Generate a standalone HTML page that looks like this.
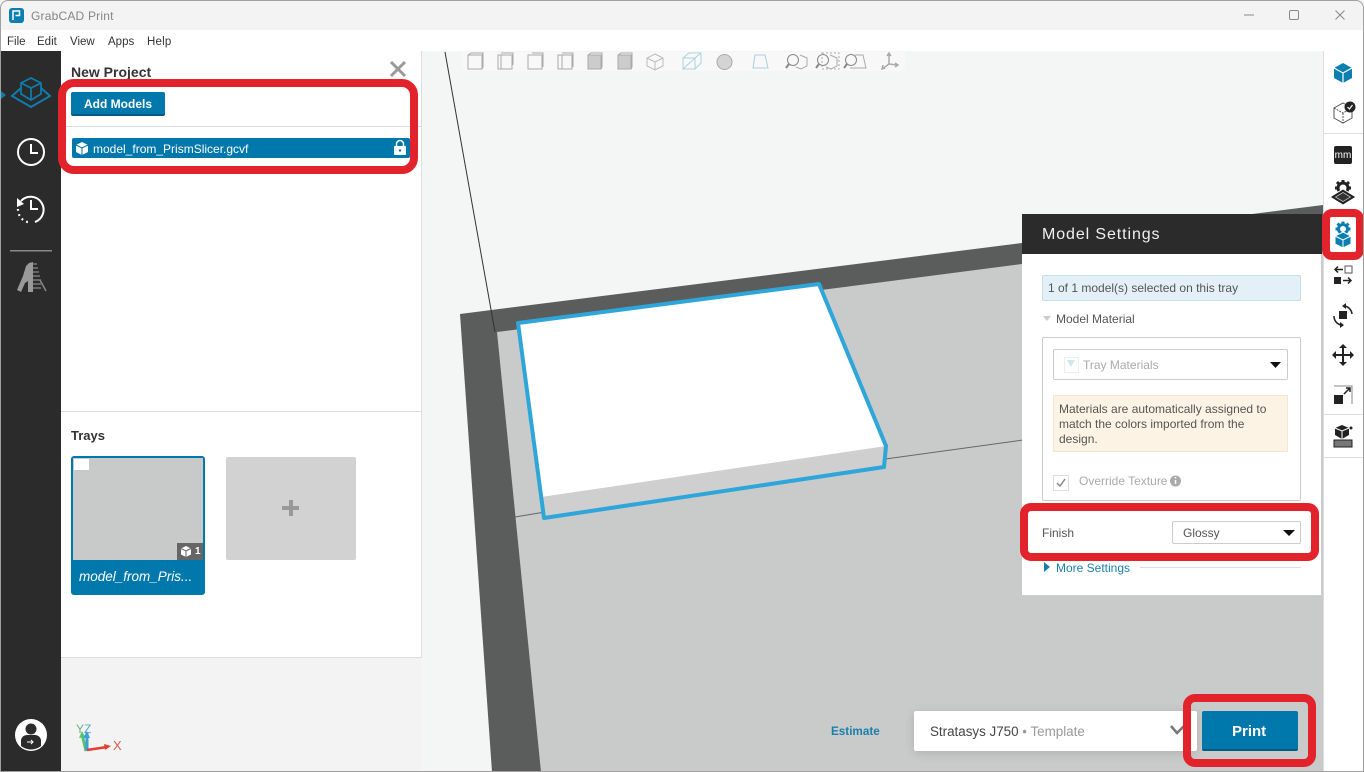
<!DOCTYPE html>
<html><head><meta charset="utf-8"><style>
html,body{margin:0;padding:0;background:#fff}
#w{position:relative;width:1364px;height:772px;overflow:hidden;font-family:"Liberation Sans",sans-serif;font-size:12px;color:#444}
.a{position:absolute}
.t{position:absolute;white-space:nowrap;line-height:14px}
svg{position:absolute;left:0;top:0}
</style></head><body><div id="w">
<div class="a" style="left:0;top:0;width:1364px;height:772px;background:#f4f5f5"></div>
<div class="a" style="left:462px;top:52px;width:443px;height:19px;background:#f8f8f8;border-radius:0 0 4px 4px"></div>
<svg width="1364" height="772" viewBox="0 0 1364 772">
<polygon points="460,314 1323,205 1323,772 492,772" fill="#5b5c5c"/>
<polygon points="497,332 1323,225 1323,772 541,772" fill="#c9caca"/>
<line x1="445" y1="52" x2="495" y2="332" stroke="#333" stroke-width="1"/>
<line x1="515" y1="517" x2="545" y2="512" stroke="#666" stroke-width="1"/>
<line x1="885" y1="459" x2="1023" y2="440" stroke="#666" stroke-width="1"/>
<polygon points="518,323 819,284 886,446 884,467 544,518" fill="#cfcfcf"/>
<polygon points="518,323 819,284 886,446 541,497" fill="#fff"/>
<polygon points="518,323 819,284 886,446 884,467 544,518" fill="none" stroke="#2fa6d9" stroke-width="4" stroke-linejoin="round"/>
</svg>
<div class="a" style="left:0;top:0;width:1364px;height:30px;background:#f3f3f3"></div>
<div class="a" style="left:0;top:30px;width:1364px;height:21px;background:#fff"></div>
<div class="t" style="left:31px;top:9px;color:#858585;font-size:12px;letter-spacing:.2px">GrabCAD Print</div>
<div class="t" style="left:7px;top:35px;font-size:11.5px;color:#333">File</div>
<div class="t" style="left:37px;top:35px;font-size:11.5px;color:#333">Edit</div>
<div class="t" style="left:70px;top:35px;font-size:11.5px;color:#333">View</div>
<div class="t" style="left:108px;top:35px;font-size:11.5px;color:#333">Apps</div>
<div class="t" style="left:147px;top:35px;font-size:11.5px;letter-spacing:.2px;color:#333">Help</div>
<div class="a" style="left:1px;top:51px;width:60px;height:720px;background:#2b2b2b"></div>
<div class="a" style="left:61px;top:51px;width:360px;height:606px;background:#fff;border-right:1px solid #ddd;border-bottom:1px solid #ddd"></div>
<div class="a" style="left:61px;top:658px;width:360px;height:113px;background:#f3f3f3"></div>
<div class="t" style="left:71px;top:65px;font-size:14px;font-weight:bold;color:#333">New Project</div>
<div class="a" style="left:71px;top:92px;width:94px;height:24px;background:#0078ab;border-bottom:2px solid #055a80;box-sizing:border-box;border-radius:2px"></div>
<div class="t" style="left:84px;top:97px;font-size:12px;font-weight:bold;color:#fff">Add Models</div>
<div class="a" style="left:61px;top:126px;width:360px;height:1px;background:#ddd"></div>
<div class="a" style="left:72px;top:138px;width:338px;height:20px;background:#0078ab;border-radius:2px"></div>
<div class="t" style="left:93px;top:142px;font-size:12px;color:#fff">model_from_PrismSlicer.gcvf</div>
<div class="a" style="left:61px;top:411px;width:360px;height:1px;background:#ddd"></div>
<div class="t" style="left:71px;top:429px;font-size:13px;font-weight:bold;color:#333">Trays</div>
<div class="a" style="left:71px;top:456px;width:134px;height:139px;background:#0078ab;border-radius:3px"></div>
<div class="a" style="left:73px;top:458px;width:130px;height:102px;background:#c8c9c9"></div>
<div class="a" style="left:74px;top:459px;width:15px;height:11px;background:#fff"></div>
<div class="a" style="left:177px;top:543px;width:26px;height:17px;background:#666"></div>
<div class="t" style="left:195px;top:545px;font-size:10px;font-weight:bold;color:#fff">1</div>
<div class="t" style="left:79px;top:570px;font-size:13.5px;font-style:italic;color:#fff">model_from_Pris...</div>
<div class="a" style="left:226px;top:457px;width:130px;height:103px;background:#d2d2d2;border-radius:2px"></div>
<div class="a" style="left:282px;top:506px;width:17px;height:4px;background:#999"></div>
<div class="a" style="left:289px;top:500px;width:4px;height:16px;background:#999"></div>
<div class="t" style="left:76px;top:722px;font-size:12px;color:#6cb08a">Y<span style="color:#5aa6c8">Z</span></div>
<div class="t" style="left:113px;top:739px;font-size:13px;color:#d8584f">X</div>
<div class="a" style="left:831px;top:725px;font-size:11.7px;font-weight:bold;color:#1a7fab;white-space:nowrap;line-height:14px">Estimate</div>
<div class="a" style="left:914px;top:711px;width:283px;height:40px;background:#fff;border-radius:2px;box-shadow:0 2px 10px rgba(0,0,0,.12)"></div>
<div class="t" style="left:930px;top:725px;font-size:13.4px;color:#444">Stratasys J750 <span style="color:#999">• Template</span></div>
<div class="a" style="left:1202px;top:711px;width:96px;height:40px;background:#0078ab;border-bottom:2px solid #055a80;box-sizing:border-box;border-radius:2px"></div>
<div class="t" style="left:1232px;top:725px;font-size:15px;font-weight:bold;color:#fff">Print</div>
<div class="a" style="left:1323px;top:51px;width:41px;height:721px;background:#fff;border-left:1px solid #ddd;box-sizing:border-box"></div>
<div class="a" style="left:1323px;top:133px;width:41px;height:1px;background:#ddd"></div>
<div class="a" style="left:1323px;top:414px;width:41px;height:1px;background:#ddd"></div>
<div class="a" style="left:1323px;top:457px;width:41px;height:1px;background:#ddd"></div>
<div class="a" style="left:1022px;top:214px;width:300px;height:382px;background:#fff;border-right:1px solid #ccc;border-bottom:1px solid #ccc;box-sizing:border-box"></div>
<div class="a" style="left:1022px;top:214px;width:300px;height:40px;background:#2b2b2b"></div>
<div class="t" style="left:1042px;top:228px;font-size:16px;color:#f0f0f0;letter-spacing:.9px">Model Settings</div>
<div class="a" style="left:1042px;top:275px;width:259px;height:26px;background:#e3f0f7;border:1px solid #c8dfea;box-sizing:border-box;border-radius:2px"></div>
<div class="t" style="left:1048px;top:281px;font-size:12px;color:#555">1 of 1 model(s) selected on this tray</div>
<div class="t" style="left:1056px;top:312px;font-size:12px;color:#555">Model Material</div>
<div class="a" style="left:1042px;top:337px;width:259px;height:164px;border:1px solid #ccc;box-sizing:border-box;border-radius:2px"></div>
<div class="a" style="left:1053px;top:349px;width:235px;height:31px;border:1px solid #ccc;box-sizing:border-box;border-radius:2px"></div>
<div class="t" style="left:1083px;top:358px;font-size:12px;color:#aaa">Tray Materials</div>
<div class="a" style="left:1053px;top:395px;width:235px;height:57px;background:#fdf3e4;border:1px solid #f6e6cf;box-sizing:border-box"></div>
<div class="t" style="left:1059px;top:402px;font-size:12px;color:#555;line-height:15px">Materials are automatically assigned to<br>match the colors imported from the<br>design.</div>
<div class="a" style="left:1053px;top:475px;width:16px;height:16px;border:1px solid #ddd;box-sizing:border-box"></div>
<div class="t" style="left:1079px;top:474px;font-size:12px;color:#aaa">Override Texture</div>
<div class="t" style="left:1042px;top:526px;font-size:12px;color:#555">Finish</div>
<div class="a" style="left:1172px;top:521px;width:129px;height:23px;border:1px solid #ccc;box-sizing:border-box;border-radius:2px"></div>
<div class="t" style="left:1183px;top:526px;font-size:12px;color:#555">Glossy</div>
<div class="t" style="left:1056px;top:561px;font-size:12px;color:#1a7fab">More Settings</div>
<div class="a" style="left:1140px;top:567px;width:161px;height:1px;background:#ddd"></div>
<svg width="1364" height="772" viewBox="0 0 1364 772">
<rect x="9" y="8" width="15" height="15" rx="3" fill="#0a7fb0"/>
<path d="M13 20V11h6.500v4.500H15.500" fill="none" stroke="#fff" stroke-width="1.500"/>
<g fill="none" stroke="#888" stroke-width="1">
<path d="M1244 15h10"/><rect x="1289.500" y="10.500" width="9" height="9" rx="1.500"/><path d="M1335.500 10.500l9 9M1344.500 10.500l-9 9"/>
</g>
<path d="M391 62l14 14M405 62l-14 14" stroke="#999" stroke-width="3" fill="none"/>
<path d="M1 91l5 4-5 4z" fill="#0a7fb0"/>
<g fill="none" stroke="#0a7fb0" stroke-width="2">
<path d="M21 88l-9 8 19 11 19-11-9-8"/>
</g>
<g fill="none" stroke="#0a7fb0" stroke-width="1.700">
<path d="M31 78l10 5v11l-10 6-10-6V83zM21 83l10 5 10-5M31 88v12"/>
</g>
<g fill="none" stroke="#fff" stroke-width="2">
<circle cx="31" cy="152" r="13"/><path d="M31 144v9h7"/>
<g transform="translate(0 -2)">
<path d="M21 203a13 13 0 1 1 14 21"/><path d="M31 202v9h7"/>
<path d="M18 211a13 13 0 0 0 13 13.500" stroke-dasharray="1.800 3.500" stroke-width="2.200"/>
</g>
</g>
<path d="M17 198l7 6-7 3z" fill="#fff"/>
<rect x="10" y="250" width="42" height="1.500" fill="#888"/>
<path d="M33 262v30h-5v-11l-3 2-4 9-4-2 6-14 3-10 3-3z" fill="#999"/>
<g stroke="#888" stroke-width="1.200"><path d="M33 264h4M33 268h5M33 272h6M33 276h7M33 280h8M33 284h8M33 288h8"/><path d="M40 280l6 11" stroke-width="1.500"/></g>
<circle cx="31" cy="735" r="16" fill="#fff"/>
<circle cx="31" cy="729" r="5.500" fill="#2b2b2b"/>
<path d="M21 746v-6a6 6 0 0 1 6-5h8a6 6 0 0 1 6 5v6a16 16 0 0 1-20 0z" fill="#2b2b2b"/>
<path d="M27 742h6m-2-2l2 2-2 2" stroke="#fff" fill="none"/>
<path d="M86 751l-4-17" stroke="#55c46a" stroke-width="3"/><path d="M79 738l3-7 3 6z" fill="#55c46a"/>
<path d="M87 751v-18" stroke="#3aa0d8" stroke-width="3"/><path d="M83 738l4-7 3 7z" fill="#3aa0d8"/>
<path d="M87 750l20-3" stroke="#e2402f" stroke-width="2.500"/><path d="M104 744l7 2-6 4z" fill="#e2402f"/>
<g transform="translate(76 147)"><path d="M6 -5l6 3v7l-6 3-6-3v-7z" fill="#fff"/><path d="M0 -2l6 3 6-3M6 1v7" stroke="#0078ab" stroke-width="1" fill="none"/></g>
<g transform="translate(400 148)"><rect x="-6" y="-2" width="12" height="9" rx="1" fill="#fff"/><path d="M-3.500 -2v-2a3.500 3.500 0 0 1 7 0v2" stroke="#fff" stroke-width="1.500" fill="none"/><circle r="1.200" cy="2.500" fill="#0078ab"/></g>
<g transform="translate(180 547)"><path d="M6 -1l5 2.500v6l-5 2.500-5-2.500v-6z" fill="#fff"/><path d="M1 1.500l5 2.500 5-2.500M6 4v6" stroke="#666" fill="none"/></g>
<path d="M1171 726l6 7 7-7" stroke="#777" stroke-width="2.500" fill="none"/>
<path d="M1270 362h11l-5.500 6zM1283 530h12l-6 6z" fill="#111"/>
<path d="M1043 316h8l-4 5z" fill="#ccc"/>
<path d="M1044 562l6 5-6 5z" fill="#1a7fab"/>
<rect x="1064.500" y="357.500" width="14" height="15" fill="none" stroke="#eee"/><path d="M1067 360h8l-4 7z" fill="#cfe8f1"/>
<path d="M1057 483l3 3 5-7" stroke="#888" stroke-width="1.500" fill="none"/>
<circle cx="1175.500" cy="481" r="5.500" fill="#aaa"/><path d="M1175.500 480v4M1175.500 477v1.500" stroke="#fff" stroke-width="1.500"/>
<g fill="none" stroke="#aaa" stroke-width="1">
<rect x="468" y="55" width="14" height="14"/><path d="M468 55l3-2h12l-1 2M482 55v14l1-2V53"/>
<rect x="498" y="55" width="14" height="14"/><path d="M501 55v14M501 53h12v12"/>
<rect x="528" y="55" width="14" height="14"/><path d="M532 53h11v14"/>
<rect x="558" y="55" width="14" height="14"/><path d="M562 55v14M562 53h11v14"/>
<path d="M588 55h13v14h-13z" fill="#ccc"/><path d="M588 55l3-2h11v14l-1 2"/>
<path d="M618 55h13v14h-13z" fill="#ccc"/><path d="M618 55l3-2h11v14l-1 2"/>
<path d="M655 54l8 4v8l-8 4-8-4v-8zM647 58l8 4 8-4M655 62v8" stroke="#bbb"/>
<path d="M683 58h12v11h-12zM683 58l6-5h12v10l-6 6M695 58l6-5M683 69l12-11" stroke="#a8d3de"/>
<circle cx="724.500" cy="62" r="7.500" fill="#d4d4d4"/>
<path d="M755 55h10l3 13h-15z" stroke="#a8cfdf"/>
<circle cx="793" cy="60" r="5.500" stroke="#888"/><path d="M789 64l-3 4" stroke="#888" stroke-width="2"/><path d="M800 55l7 3v8l-6 3-5-2"/>
<circle cx="823" cy="60" r="5.500" stroke="#888"/><path d="M819 64l-3 4" stroke="#888" stroke-width="2"/><path d="M830 55l7 3v8l-6 3-5-2"/><rect x="822" y="53" width="17" height="16" stroke-dasharray="2 2"/>
<circle cx="851" cy="60" r="5.500" stroke="#888"/><path d="M847 64l-3 4" stroke="#888" stroke-width="2"/><path d="M855 55h8l3 13h-16"/>
<path d="M889 54v10l-7 5M889 64l8 1M887 56l2-3 2 3M883 65l-1 4 3-1M895 63l3 2-3 2" stroke-width="1.500"/>
</g>
<g transform="translate(1343 73)"><path d="M0 -10l9 5v10l-9 5-9-5V-5z" fill="#0a7fb0"/><path d="M-9 -5l9 5 9-5M0 0v10" stroke="#fff" stroke-width="1.200" fill="none"/></g>
<g transform="translate(1343 113)" fill="none" stroke="#555"><path d="M0 -10l9 5v10l-9 5-9-5v-10z"/><path d="M-9 -5l9 5 9-5M0 0v10" stroke-dasharray="2 1"/><circle cx="7" cy="-6" r="5.500" fill="#222" stroke="none"/><path d="M4.500 -6l2 2 3-4" stroke="#fff" stroke-width="1.200"/></g>
<rect x="1334" y="146" width="18" height="18" rx="2" fill="#222"/>
<text x="1343" y="158" font-family="Liberation Sans" font-size="10" fill="#fff" text-anchor="middle">mm</text>
<g transform="translate(1343 188)"><circle r="5" fill="#fff" stroke="#222" stroke-width="3"/><path d="M0 -8v4M-6 -6l3 3M6 -6l-3 3M-8 0h3M8 0h-3" stroke="#222" stroke-width="3"/></g>
<path d="M1343 189l13 8-13 8-13-8z" fill="#222" stroke="#fff" stroke-width="1"/>
<path d="M1343 192.500l7.500 4.500-7.500 4.500-7.500-4.500z" fill="#333" stroke="#bbb" stroke-width=".8"/>
<g transform="translate(1343 229)"><circle r="4.500" fill="#fff" stroke="#0a7fb0" stroke-width="3"/><path d="M0 -7.500v3M-5.500 -5.500l2.500 2.500M5.500 -5.500l-2.500 2.500M-7.500 0h3M7.500 0h-3" stroke="#0a7fb0" stroke-width="3"/></g>
<g transform="translate(1343 240)"><path d="M0 -8l8 4v8l-8 4-8-4v-8z" fill="#0a7fb0" stroke="#fff"/><path d="M-8 -4l8 4 8-4M0 0v8" stroke="#fff" fill="none"/></g>
<g transform="translate(1343 275)"><rect x="2" y="-9" width="7" height="7" fill="none" stroke="#555"/><rect x="-9" y="2" width="7" height="7" fill="#222"/><path d="M0 -5.500h-8m3 -3l-3 3 3 3M0 5.500h8m-3 -3l3 3-3 3" fill="none" stroke="#222" stroke-width="1.500"/></g>
<g transform="translate(1343 315)"><rect x="-4" y="-4" width="8" height="8" fill="#222"/><path d="M2 -9a9 9 0 0 1 7 8M-2 10a9 9 0 0 1-7-9" fill="none" stroke="#222" stroke-width="1.500"/><path d="M-1 -9l4-3v6zM1 10l-4 3v-6z" fill="#222"/></g>
<g transform="translate(1343 355)"><path d="M0 -9V9M-9 0H9" stroke="#222" stroke-width="2"/><path d="M0 -11l-4 4h8zM0 11l-4-4h8zM-11 0l4-4v8zM11 0l-4-4v8z" fill="#222"/></g>
<g transform="translate(1343 395)"><path d="M-9 -9H9V9" fill="none" stroke="#888"/><path d="M-9 0h9v9h-9z" fill="#222"/><path d="M1 -1l6-6M3 -7h4v4" stroke="#222" stroke-width="1.500" fill="none"/></g>
<g transform="translate(1343 435)"><path d="M-1 -10l7 3v7l-7 4-7-4v-7z" fill="#222"/><path d="M-8 -7l7 3 7-3M-1 -4v8" stroke="#fff" fill="none"/><circle cx="8" cy="-7" r="1.500" fill="#222"/><rect x="-9" y="5" width="18" height="7" fill="#777" stroke="#222"/></g>
<g fill="none" stroke="#e2232c" stroke-width="8">
<rect x="62" y="83" width="352" height="87" rx="12"/>
<rect x="1326" y="213" width="34" height="43" rx="6"/>
<rect x="1024" y="507" width="291" height="50" rx="7"/>
<rect x="1187" y="698" width="125" height="65" rx="8"/>
</g>
</svg>
<div class="a" style="left:0;top:0;width:1364px;height:772px;box-sizing:border-box;border:1px solid #a0a0a0;border-radius:8px 8px 0 0;pointer-events:none"></div>
</div></body></html>
